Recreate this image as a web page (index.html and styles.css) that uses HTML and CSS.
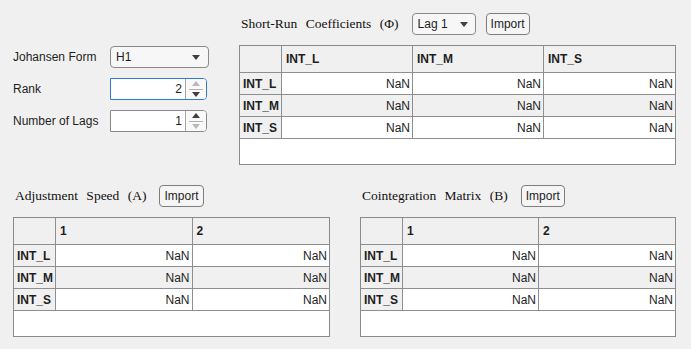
FILE: index.html
```html
<!DOCTYPE html>
<html lang="en">
<head>
  <meta charset="UTF-8">
  <title>VEC Model Parameters</title>
  <link rel="stylesheet" href="styles.css">
</head>
<body>

  <div class="app">
    <div class="top">

      <div class="controls">
        <label class="ctl-label">Johansen Form</label>
        <div class="select">
          <span>H1</span>
          <svg class="caret" width="8" height="5" viewBox="0 0 8 5"><polygon points="0,0 8,0 4,5"/></svg>
        </div>

        <label class="ctl-label">Rank</label>
        <div class="spinner focus">
          <span class="spin-value">2</span>
          <span class="spin-arrows">
            <svg class="arrow off" width="8" height="5" viewBox="0 0 8 5"><polygon points="0,5 8,5 4,0"/></svg>
            <span class="spin-sep"></span>
            <svg class="arrow" width="8" height="5" viewBox="0 0 8 5"><polygon points="0,0 8,0 4,5"/></svg>
          </span>
        </div>

        <label class="ctl-label">Number of Lags</label>
        <div class="spinner">
          <span class="spin-value">1</span>
          <span class="spin-arrows">
            <svg class="arrow" width="8" height="5" viewBox="0 0 8 5"><polygon points="0,5 8,5 4,0"/></svg>
            <span class="spin-sep"></span>
            <svg class="arrow off" width="8" height="5" viewBox="0 0 8 5"><polygon points="0,0 8,0 4,5"/></svg>
          </span>
        </div>
      </div>

      <div class="panel panel-wide">
        <div class="panel-head">
          <span class="panel-title">Short-Run Coefficients (&Phi;)</span>
          <div class="select select-small">
            <span>Lag 1</span>
            <svg class="caret" width="8" height="5" viewBox="0 0 8 5"><polygon points="0,0 8,0 4,5"/></svg>
          </div>
          <button class="btn">Import</button>
        </div>
        <div class="table-box">
          <table class="grid">
            <thead>
              <tr><th class="corner"></th><th>INT_L</th><th>INT_M</th><th>INT_S</th></tr>
            </thead>
            <tbody>
              <tr><th>INT_L</th><td>NaN</td><td>NaN</td><td>NaN</td></tr>
              <tr><th>INT_M</th><td>NaN</td><td>NaN</td><td>NaN</td></tr>
              <tr><th>INT_S</th><td>NaN</td><td>NaN</td><td>NaN</td></tr>
            </tbody>
          </table>
        </div>
      </div>

    </div>

    <div class="bottom">
      <div class="panel panel-left">
        <div class="panel-head">
          <span class="panel-title">Adjustment Speed (A)</span>
          <button class="btn">Import</button>
        </div>
        <div class="table-box">
          <table class="grid">
            <thead>
              <tr><th class="corner"></th><th>1</th><th>2</th></tr>
            </thead>
            <tbody>
              <tr><th>INT_L</th><td>NaN</td><td>NaN</td></tr>
              <tr><th>INT_M</th><td>NaN</td><td>NaN</td></tr>
              <tr><th>INT_S</th><td>NaN</td><td>NaN</td></tr>
            </tbody>
          </table>
        </div>
      </div>

      <div class="panel panel-right">
        <div class="panel-head">
          <span class="panel-title">Cointegration Matrix (B)</span>
          <button class="btn">Import</button>
        </div>
        <div class="table-box">
          <table class="grid">
            <thead>
              <tr><th class="corner"></th><th>1</th><th>2</th></tr>
            </thead>
            <tbody>
              <tr><th>INT_L</th><td>NaN</td><td>NaN</td></tr>
              <tr><th>INT_M</th><td>NaN</td><td>NaN</td></tr>
              <tr><th>INT_S</th><td>NaN</td><td>NaN</td></tr>
            </tbody>
          </table>
        </div>
      </div>
    </div>
  </div>

</body>
</html>
```

FILE: styles.css
```css
body {
  margin: 0;
  background: #f0f0f0;
  font-family: "Liberation Sans", Arial, sans-serif;
  font-size: 12px;
  color: #1e1e1e;
}

.app {
  width: 691px;
  padding: 13px 0 0 13px;
  box-sizing: border-box;
}

.top {
  display: flex;
  gap: 30px;
}

/* left column : form controls */
.controls {
  width: 196px;
  padding-top: 33px;
  display: grid;
  grid-template-columns: 97px 99px;
  grid-auto-rows: 22px;
  row-gap: 10px;
  align-items: center;
}

.ctl-label {
  line-height: 22px;
}

.select {
  height: 22px;
  box-sizing: border-box;
  border: 1px solid #8a8a8a;
  border-radius: 4px;
  background: #f7f7f7;
  display: flex;
  align-items: center;
  justify-content: space-between;
  padding: 0 8px 0 5px;
}

.select-small {
  width: 64px;
  padding-right: 7px;
}

.caret polygon,
.arrow polygon {
  fill: #3f3f3f;
}

.arrow.off polygon {
  fill: #b8b8b8;
}

.spinner {
  width: 97px;
  height: 22px;
  box-sizing: border-box;
  border: 1px solid #8a8a8a;
  border-radius: 0 4px 4px 0;
  background: #fff;
  display: flex;
}

.spinner.focus {
  border-color: #2b7cd3;
}

.spin-value {
  flex: 1;
  text-align: right;
  padding-right: 3px;
  line-height: 20px;
  border-right: 1px solid #a6a6a6;
}

.spin-arrows {
  width: 20px;
  display: flex;
  flex-direction: column;
  align-items: center;
  justify-content: space-evenly;
  background: #f9f9f9;
  border-radius: 0 3px 3px 0;
}

.spin-sep {
  width: 14px;
  height: 1px;
  background: #b0b0b0;
}

/* panels with tables */
.panel-wide {
  width: 437px;
}

.panel-left {
  width: 317px;
}

.panel-right {
  width: 316px;
}

.panel-head {
  height: 22px;
  display: flex;
  align-items: center;
  gap: 13px;
  margin-bottom: 10px;
}

.panel-head .select-small {
  margin-right: -3px;
}

.panel-title {
  font-family: "Liberation Serif", "Times New Roman", serif;
  font-size: 13.5px;
  word-spacing: 5px;
  padding-left: 2px;
  color: #111;
}

.btn {
  height: 22px;
  padding: 0 4px;
  font-family: "Liberation Sans", Arial, sans-serif;
  font-size: 12px;
  color: #1e1e1e;
  background: #f5f5f5;
  border: 1px solid #7d7d7d;
  border-radius: 4px;
}

.table-box {
  height: 120px;
  box-sizing: border-box;
  border: 1px solid #8a8a8a;
  background: #fff;
}

.grid {
  width: 100%;
  border-collapse: separate;
  border-spacing: 0;
  table-layout: fixed;
}

.grid th,
.grid td {
  box-sizing: border-box;
  height: 22px;
  padding: 0 2px;
  border-right: 1px solid #8e8e8e;
  border-bottom: 1px solid #8e8e8e;
  font-size: 12px;
  white-space: nowrap;
  overflow: hidden;
}

.grid th:last-child,
.grid td:last-child {
  border-right: none;
}

.grid thead th {
  height: 27px;
  padding-left: 4px;
  text-align: left;
  background: #f0f0f0;
}

.grid .corner {
  width: 42px;
}

.grid tbody th {
  padding-left: 3px;
  text-align: left;
  background: #f0f0f0;
}

.grid td {
  text-align: right;
  background: #fff;
}

.grid tbody tr:nth-child(2) td {
  background: #f0f0f0;
}

.bottom {
  display: flex;
  gap: 30px;
  margin-top: 20px;
}
```
